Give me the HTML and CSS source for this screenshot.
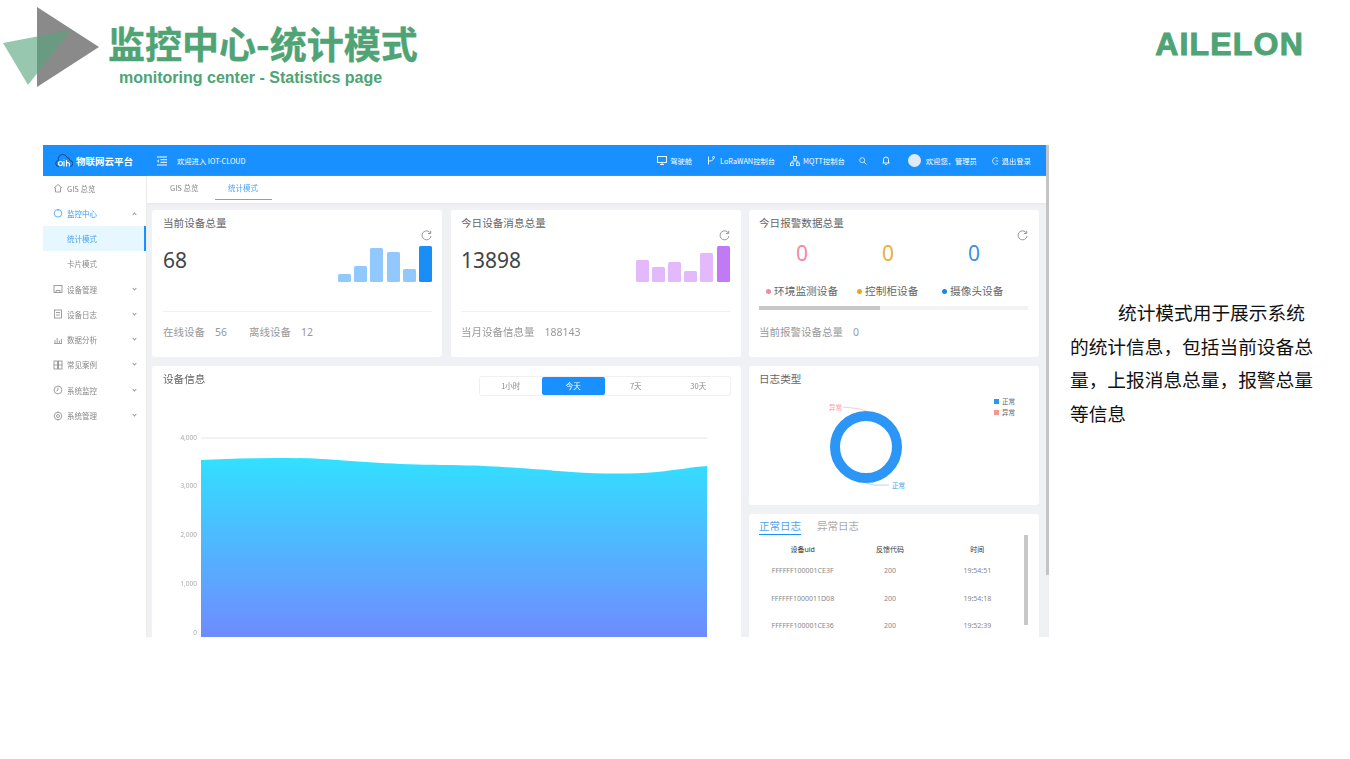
FILE: index.html
```html
<!DOCTYPE html>
<html>
  <head>
    <meta charset="UTF-8" />
    <title>监控中心-统计模式</title>
    <link rel="stylesheet" href="styles.css">
  </head>
  <body>
    <div class="slide">
      <header class="slide-head">
        <svg class="slide-logo" width="108" height="90" viewBox="0 0 108 90">
          <polygon points="37,7 99,47 37,87" fill="#8a8a8a" />
          <polygon points="3,43 71,30 28,85" fill="#58a57f" fill-opacity="0.62" />
        </svg>
        <div class="slide-title">
          <h1>监控中心-统计模式</h1>
          <p>monitoring center - Statistics page</p>
        </div>
        <div class="brand">AILELON</div>
      </header>

      <main class="slide-body">
        <div class="app">
          <div class="app-inner">
            <div class="topbar">
              <svg class="top-logo" width="18" height="14" viewBox="0 0 18 14" fill="none" stroke="#123f73" stroke-width="1.100">
                <path d="M4 12.500a3 3 0 0 1-0.500-6A4.500 4.500 0 0 1 12 3.500a3.500 3.500 0 0 1 3 3 3 3 0 0 1-0.500 6" stroke-width="0.900" />
                <circle cx="5.500" cy="9.500" r="2" stroke="#fff" />
                <path d="M9 12.500V7M9 5.500V5M11.500 12.500V6M11.500 9a2 2 0 0 1 3 1v2.500" stroke="#fff" />
              </svg>
              <span class="top-name">物联网云平台</span>
              <svg class="top-menu" width="10" height="10" viewBox="0 0 10 10" fill="none" stroke="#fff" stroke-width="1">
                <path d="M0 1h10M3.500 3.700h6.500M3.500 6.300h6.500M0 9h10M2 3.800L0.500 5l1.500 1.200" />
              </svg>
              <span class="top-welcome">欢迎进入 IOT-CLOUD</span>
              <div class="top-right">
                <span class="top-link link-a">
                  <svg width="10" height="9" viewBox="0 0 10 9" fill="none" stroke="#fff" stroke-width="0.9"><rect x="0.500" y="0.500" width="9" height="6" /><path d="M3 8.500h4M5 6.500v2" /></svg>
                  驾驶舱
                </span>
                <span class="top-link link-b">
                  <svg width="8" height="9" viewBox="0 0 8 9" fill="none" stroke="#fff" stroke-width="0.9"><path d="M1.500 0.500v8M1.500 5c4 0 5-1 5-3" /><circle cx="6.500" cy="1.500" r="1" /></svg>
                  LoRaWAN控制台
                </span>
                <span class="top-link link-c">
                  <svg width="10" height="10" viewBox="0 0 10 10" fill="none" stroke="#fff" stroke-width="0.8"><rect x="3.500" y="0.500" width="3" height="2.500" /><rect x="0.500" y="7" width="3" height="2.500" /><rect x="6.500" y="7" width="3" height="2.500" /><path d="M5 3v2M2 7V5h6v2" /></svg>
                  MQTT控制台
                </span>
                <svg class="top-search" width="8" height="8" viewBox="0 0 8 8" fill="none" stroke="#d5eaff" stroke-width="0.9"><circle cx="3.200" cy="3.200" r="2.500" /><path d="M5 5l2.500 2.500" /></svg>
                <svg class="top-bell" width="8" height="9" viewBox="0 0 8 9" fill="none" stroke="#fff" stroke-width="0.9"><path d="M1.500 7V3.500a2.500 2.500 0 0 1 5 0V7M0.500 7h7M3.200 8.500h1.600" /></svg>
                <span class="avatar"></span>
                <span class="top-user">欢迎您，管理员</span>
                <span class="top-link link-d">
                  <svg width="7" height="8" viewBox="0 0 7 8" fill="none" stroke="#d5eaff" stroke-width="0.9"><path d="M6 1.500A3.300 3.300 0 1 0 6 6.500M3.500 4h3" /></svg>
                  退出登录
                </span>
              </div>
            </div>

            <div class="app-main">
              <nav class="sidebar">
                <a class="nav-item">
                  <svg class="nav-icon" viewBox="0 0 10 10"><path d="M1 5l4-3.500L9 5M2.500 4.500V9h5V4.500" /></svg>
                  GIS 总览
                </a>
                <a class="nav-item is-open">
                  <svg class="nav-icon" viewBox="0 0 10 10"><circle cx="5" cy="5.300" r="3.800" /><path d="M5 1v2" /></svg>
                  监控中心
                  <i class="nav-arrow up"></i>
                </a>
                <a class="nav-item nav-sub is-active">统计模式</a>
                <a class="nav-item nav-sub">卡片模式</a>
                <a class="nav-item">
                  <svg class="nav-icon" viewBox="0 0 10 10"><rect x="1" y="1.500" width="8" height="7" /><path d="M3 8.500V6.500h4v2" /></svg>
                  设备管理
                  <i class="nav-arrow"></i>
                </a>
                <a class="nav-item">
                  <svg class="nav-icon" viewBox="0 0 10 10"><rect x="1.500" y="1" width="7" height="8" /><path d="M3 3.500h4M3 6h4" /></svg>
                  设备日志
                  <i class="nav-arrow"></i>
                </a>
                <a class="nav-item">
                  <svg class="nav-icon" viewBox="0 0 10 10"><path d="M1 8.500h8M2 8V5M4.200 8V3M6.400 8V5.500M8.400 8V4" /></svg>
                  数据分析
                  <i class="nav-arrow"></i>
                </a>
                <a class="nav-item">
                  <svg class="nav-icon" viewBox="0 0 10 10"><rect x="1" y="1" width="3.500" height="8" /><rect x="5.500" y="1" width="3.500" height="8" /><path d="M1 5h3.500M5.500 5H9" /></svg>
                  常见案例
                  <i class="nav-arrow"></i>
                </a>
                <a class="nav-item">
                  <svg class="nav-icon" viewBox="0 0 10 10"><circle cx="5" cy="5" r="3.900" /><path d="M5 2.500V5l-1.500 1" /></svg>
                  系统监控
                  <i class="nav-arrow"></i>
                </a>
                <a class="nav-item">
                  <svg class="nav-icon" viewBox="0 0 10 10"><circle cx="5" cy="5" r="3.800" /><circle cx="5" cy="5" r="1.500" /><path d="M5 0.500v1.500M5 8v1.500" /></svg>
                  系统管理
                  <i class="nav-arrow"></i>
                </a>
              </nav>

              <div class="page">
                <div class="tabs">
                  <span class="tab">GIS 总览</span>
                  <span class="tab is-active">统计模式</span>
                </div>

                <div class="grid">
                  <section class="card stat">
                    <h3 class="card-title">当前设备总量</h3>
                    <div class="stat-main">
                      <div class="stat-num">68</div>
                      <div class="stat-side">
                        <svg class="refresh" width="11" height="11" viewBox="0 0 11 11" fill="none" stroke="#9a9a9a" stroke-width="1"><path d="M9.500 3.200A4.500 4.500 0 1 0 10 6M9.700 0.800v2.700H7" /></svg>
                        <div class="bars blue">
                          <i style="height:8px"></i><i style="height:16px"></i><i style="height:34px"></i><i style="height:30px"></i><i style="height:13px"></i><i style="height:36px"></i>
                        </div>
                      </div>
                    </div>
                    <div class="stat-foot">
                      <span>在线设备<b>56</b></span>
                      <span>离线设备<b>12</b></span>
                    </div>
                  </section>

                  <section class="card stat stat-mid">
                    <h3 class="card-title">今日设备消息总量</h3>
                    <div class="stat-main">
                      <div class="stat-num">13898</div>
                      <div class="stat-side">
                        <svg class="refresh" width="11" height="11" viewBox="0 0 11 11" fill="none" stroke="#9a9a9a" stroke-width="1"><path d="M9.500 3.200A4.500 4.500 0 1 0 10 6M9.700 0.800v2.700H7" /></svg>
                        <div class="bars purple">
                          <i style="height:22px"></i><i style="height:15px"></i><i style="height:20px"></i><i style="height:11px"></i><i style="height:29px"></i><i style="height:36px"></i>
                        </div>
                      </div>
                    </div>
                    <div class="stat-foot">
                      <span>当月设备信息量<b>188143</b></span>
                    </div>
                  </section>

                  <section class="card alarm">
                    <h3 class="card-title">今日报警数据总量</h3>
                    <svg class="refresh refresh-float" width="11" height="11" viewBox="0 0 11 11" fill="none" stroke="#9a9a9a" stroke-width="1"><path d="M9.500 3.200A4.500 4.500 0 1 0 10 6M9.700 0.800v2.700H7" /></svg>
                    <div class="alarm-nums">
                      <span class="c-pink">0</span>
                      <span class="c-amber">0</span>
                      <span class="c-blue">0</span>
                    </div>
                    <div class="alarm-legend">
                      <span><i class="dot bg-pink"></i>环境监测设备</span>
                      <span><i class="dot bg-amber"></i>控制柜设备</span>
                      <span><i class="dot bg-blue"></i>摄像头设备</span>
                    </div>
                    <div class="alarm-scroll"><i></i></div>
                    <div class="stat-foot alarm-foot">
                      <span>当前报警设备总量<b>0</b></span>
                    </div>
                  </section>

                  <section class="card chart-card">
                    <div class="chart-head">
                      <h3 class="card-title">设备信息</h3>
                      <div class="segment">
                        <span>1小时</span>
                        <span class="is-active">今天</span>
                        <span>7天</span>
                        <span>30天</span>
                      </div>
                    </div>
                    <svg class="chart" width="589" height="242" viewBox="0 0 589 242">
                      <defs>
                        <linearGradient id="areaFill" x1="0" y1="0" x2="0" y2="1">
                          <stop offset="0" stop-color="#32e0ff" />
                          <stop offset="1" stop-color="#6f8bff" />
                        </linearGradient>
                      </defs>
                      <path d="M49 43H555M49 91H555M49 140H555M49 189H555" stroke="#e6e6e6" stroke-width="1" fill="none" />
                      <g class="axis">
                        <text x="45" y="45">4,000</text>
                        <text x="45" y="93">3,000</text>
                        <text x="45" y="142">2,000</text>
                        <text x="45" y="191">1,000</text>
                        <text x="45" y="240">0</text>
                      </g>
                      <path d="M49 65C90 63 130 62 170 64C215 67 250 70 300 70C350 71 380 74 420 77C450 79 480 79 505 77C525 75 540 72 555 71V242H49Z" fill="url(#areaFill)" />
                    </svg>
                  </section>

                  <div class="side-col">
                    <section class="card donut-card">
                      <h3 class="card-title">日志类型</h3>
                      <svg class="donut" width="290" height="139" viewBox="0 0 290 139">
                        <circle cx="117" cy="81" r="31" fill="none" stroke="#2b96f5" stroke-width="10" />
                        <path d="M94 41C102 42 110 42 117 45" fill="none" stroke="#f4b3bb" stroke-width="0.7" />
                        <path d="M117 117C125 120 132 119 140 119" fill="none" stroke="#8fc4f5" stroke-width="0.7" />
                        <text class="donut-label" x="80" y="44" fill="#f29aa6">异常</text>
                        <text class="donut-label" x="143" y="122" fill="#4a9fe8">正常</text>
                        <rect x="245" y="33" width="5" height="5" fill="#2b96f5" />
                        <rect x="245" y="44" width="5" height="5" fill="#f2998f" />
                        <text class="donut-legend" x="253" y="38">正常</text>
                        <text class="donut-legend" x="253" y="49">异常</text>
                      </svg>
                    </section>

                    <section class="card log-card">
                      <div class="log-tabs">
                        <span class="is-active">正常日志</span>
                        <span>异常日志</span>
                      </div>
                      <table class="log-table">
                        <thead>
                          <tr><th>设备uid</th><th>反馈代码</th><th>时间</th></tr>
                        </thead>
                        <tbody>
                          <tr><td>FFFFFF100001CE3F</td><td>200</td><td>19:54:51</td></tr>
                          <tr><td>FFFFFF1000011D08</td><td>200</td><td>19:54:18</td></tr>
                          <tr><td>FFFFFF100001CE36</td><td>200</td><td>19:52:39</td></tr>
                        </tbody>
                      </table>
                      <i class="log-scroll"></i>
                    </section>
                  </div>
                </div>
              </div>
            </div>
          </div>
          <div class="app-scroll"><i></i></div>
        </div>

        <p class="note">统计模式用于展示系统的统计信息，包括当前设备总量，上报消息总量，报警总量等信息</p>
      </main>
    </div>
  </body>
</html>
```

FILE: styles.css
```css
html,
body {
  margin: 0;
  background: #fff;
}
.slide {
  width: 1350px;
  height: 759px;
  overflow: hidden;
  font-family: "Noto Sans CJK SC", "Noto Sans", sans-serif;
}

/* slide header */
.slide-head {
  display: flex;
  height: 145px;
}
.slide-logo {
  flex: none;
}
.slide-title h1 {
  margin: 19px 0 0;
  font-size: 37px;
  line-height: 48px;
  font-weight: 700;
  color: #4fa374;
  -webkit-text-stroke: 0.4px #4fa374;
  white-space: nowrap;
}
.slide-title p {
  margin: 1px 0 0 11px;
  font-family: "Liberation Sans", sans-serif;
  font-size: 16px;
  line-height: 20px;
  font-weight: 700;
  color: #4fa374;
}
.brand {
  margin: 25px 46px 0 auto;
  font-family: "Liberation Sans", sans-serif;
  font-size: 32px;
  line-height: 38px;
  font-weight: 700;
  letter-spacing: 1.200px;
  color: #4fa374;
  -webkit-text-stroke: 1px #4fa374;
}

.slide-body {
  display: flex;
  padding-left: 43px;
}
.note {
  width: 245px;
  margin: 150px 0 0 21px;
  font-size: 18.700px;
  line-height: 33.500px;
  text-indent: 48px;
  color: #111;
}

/* the app inside the slide */
.app {
  display: flex;
  flex: none;
  width: 1006px;
  height: 492px;
  overflow: hidden;
  filter: blur(0.6px);
}
.app-inner {
  display: flex;
  flex-direction: column;
  width: 1003px;
}
.app-scroll {
  width: 3px;
  background: #f1f1f1;
}
.app-scroll i {
  display: block;
  height: 430px;
  background: #c4c4c4;
}

.topbar {
  display: flex;
  align-items: center;
  flex: none;
  height: 31px;
  padding: 0 15px 0 12px;
  background: #1890ff;
  color: #fff;
  font-size: 7.300px;
}
.top-logo {
  margin-right: 3px;
}
.top-name {
  width: 57px;
  font-size: 9.500px;
  font-weight: 700;
  white-space: nowrap;
}
.top-menu {
  margin-left: 24px;
}
.top-welcome {
  margin-left: 10px;
  white-space: nowrap;
}
.top-right {
  display: flex;
  align-items: center;
  margin-left: auto;
  white-space: nowrap;
}
.top-link {
  display: flex;
  align-items: center;
  gap: 3px;
}
.link-b {
  margin-left: 15px;
  gap: 5px;
}
.link-c {
  margin-left: 15px;
}
.top-search {
  margin-left: 14px;
}
.top-bell {
  margin-left: 15px;
}
.avatar {
  width: 13px;
  height: 13px;
  margin-left: 18px;
  border-radius: 50%;
  background: #dfeaf5;
}
.top-user {
  margin-left: 5px;
  width: 52px;
}
.link-d {
  margin-left: 14px;
}

.app-main {
  display: flex;
  flex: 1;
  min-height: 0;
}

/* sidebar */
.sidebar {
  flex: none;
  width: 103px;
  border-right: 1px solid #ececec;
  background: #fff;
}
.nav-item {
  display: flex;
  align-items: center;
  height: 25.300px;
  padding-left: 10px;
  font-size: 7.500px;
  color: #888;
  white-space: nowrap;
}
.nav-item:first-child {
  height: 24.500px;
}
.nav-icon {
  flex: none;
  width: 10px;
  height: 10px;
  margin-right: 4px;
  fill: none;
  stroke: #888;
  stroke-width: 0.8;
}
.nav-item.is-open {
  color: #3d9bf3;
}
.is-open .nav-icon {
  stroke: #3d9bf3;
}
.nav-arrow {
  width: 2px;
  height: 2px;
  margin: -2px 10px 0 auto;
  border-right: 1px solid #999;
  border-bottom: 1px solid #999;
  transform: rotate(45deg);
}
.nav-arrow.up {
  margin-top: 2px;
  transform: rotate(225deg);
}
.nav-sub {
  padding-left: 24px;
}
.nav-sub.is-active {
  border-right: 2px solid #1890ff;
  background: #e6f7ff;
  color: #4da3f2;
}

/* page */
.page {
  flex: 1;
  min-width: 0;
  background: #f0f1f5;
}
.tabs {
  display: flex;
  height: 27px;
  padding-left: 11px;
  background: #fff;
  box-shadow: 0 1px 2px #e6e6e6;
  font-size: 7.500px;
  color: #888;
}
.tab {
  padding: 0 12px;
  line-height: 24px;
  white-space: nowrap;
}
.tab:first-child {
  padding-right: 5px;
}
.tab.is-active {
  height: 23px;
  margin-left: 11px;
  padding: 0 13.500px;
  border-bottom: 1px solid #5aaaf5;
  color: #4da3f2;
}

.grid {
  display: grid;
  grid-template-columns: 290px 290px 290px;
  grid-template-rows: 147px auto;
  column-gap: 8.500px;
  row-gap: 9px;
  padding: 7px 0 0 5px;
}
.card {
  position: relative;
  box-sizing: border-box;
  border-radius: 3px;
  background: #fff;
}
.card-title {
  margin: 0;
  font-size: 10.600px;
  line-height: 14px;
  font-weight: 400;
  color: #666;
  white-space: nowrap;
}

/* stat cards */
.stat,
.alarm {
  padding: 6px 10px 0 11px;
}
.alarm {
  padding-left: 10px;
}
.stat-mid {
  padding: 6px 11px 0 10.500px;
}
.stat-main {
  display: flex;
  justify-content: space-between;
  height: 52px;
}
.stat-num {
  padding-top: 15px;
  font-family: "Noto Sans", sans-serif;
  font-size: 21px;
  line-height: 30px;
  color: #444;
}
.stat-side {
  display: flex;
  flex-direction: column;
  align-items: flex-end;
  justify-content: space-between;
}
.bars {
  display: flex;
  align-items: flex-end;
  gap: 3.200px;
}
.bars i {
  width: 13px;
  border-radius: 1.500px;
}
.bars.blue i {
  background: #91c8fd;
}
.bars.blue i:last-child {
  background: #1a8ef7;
}
.bars.purple i {
  background: #e3b9fb;
}
.bars.purple i:last-child {
  background: #c279f4;
}
.stat-foot {
  display: flex;
  gap: 22px;
  margin-top: 29px;
  padding-top: 13px;
  border-top: 1px solid #f0f0f0;
  font-size: 10.500px;
  line-height: 14px;
  color: #999;
  white-space: nowrap;
}
.stat-foot b {
  margin-left: 10px;
  font-family: "Noto Sans", sans-serif;
  font-weight: 400;
}

/* alarm card */
.refresh-float {
  position: absolute;
  top: 20px;
  right: 11px;
}
.alarm-nums {
  display: grid;
  grid-template-columns: repeat(3, 86px);
  margin-top: 9px;
  font-family: "Noto Sans", sans-serif;
  font-size: 21px;
  line-height: 28px;
  text-align: center;
}
.c-pink {
  color: #f08a9c;
}
.c-amber {
  color: #e6b040;
}
.c-blue {
  color: #3d8fe0;
}
.alarm-legend {
  display: grid;
  grid-template-columns: 91px 85px auto;
  margin-top: 17px;
  padding-left: 7px;
  font-size: 10.700px;
  line-height: 14px;
  color: #666;
  white-space: nowrap;
}
.dot {
  display: inline-block;
  width: 5px;
  height: 5px;
  margin-right: 3px;
  border-radius: 50%;
  vertical-align: 1px;
}
.bg-pink {
  background: #f08a9c;
}
.bg-amber {
  background: #e6a820;
}
.bg-blue {
  background: #1a85e8;
}
.alarm-scroll {
  width: 269px;
  height: 4px;
  margin-top: 8px;
  background: #f3f3f3;
}
.alarm-scroll i {
  display: block;
  width: 121px;
  height: 4px;
  background: #c8c8c8;
}
.alarm-foot {
  margin-top: 0;
  padding-top: 15px;
  border-top: 0;
}

/* area chart */
.chart-card {
  grid-column: span 2;
  width: 588.500px;
  height: 290px;
}
.chart-head {
  display: flex;
  justify-content: space-between;
  align-items: flex-start;
  padding: 6px 11px 0;
}
.segment {
  display: grid;
  grid-template-columns: repeat(4, 62.500px);
  margin-top: 5px;
  border-radius: 2px;
  box-shadow: 0 0 0 1px #f0f0f0;
  font-size: 7.500px;
  line-height: 18px;
  text-align: center;
  color: #888;
}
.segment .is-active {
  border-radius: 2px;
  background: #1890ff;
  color: #fff;
}
.chart {
  display: block;
}
.axis text {
  font-family: "Noto Sans", sans-serif;
  font-size: 6.500px;
  text-anchor: end;
  fill: #aaa;
}

/* right column */
.side-col {
  display: flex;
  flex-direction: column;
  gap: 9px;
}
.donut-card {
  height: 139px;
}
.donut-card .card-title {
  padding: 6px 10px 0;
}
.donut {
  position: absolute;
  top: 0;
  left: 0;
}
.donut-label,
.donut-legend {
  font-size: 6.500px;
}
.donut-legend {
  fill: #666;
}
.log-card {
  height: 150px;
  padding: 5px 10px;
}
.log-tabs {
  display: flex;
  gap: 16px;
  font-size: 10.500px;
  line-height: 14px;
  color: #aaa;
}
.log-tabs .is-active {
  padding-bottom: 1px;
  border-bottom: 1px solid #1890ff;
  color: #4da3f2;
}
.log-table {
  width: 262px;
  margin: 6px 0 0;
  border-collapse: collapse;
  table-layout: fixed;
  font-family: "Noto Sans", "Noto Sans CJK SC", sans-serif;
  font-size: 7px;
  text-align: center;
}
.log-table th {
  height: 16px;
  padding: 0;
  font-weight: 400;
  color: #333;
}
.log-table td {
  height: 27.500px;
  padding: 0;
  color: #888;
}
.log-scroll {
  position: absolute;
  top: 21px;
  right: 11px;
  width: 4px;
  height: 90px;
  background: #c8c8c8;
}
```
